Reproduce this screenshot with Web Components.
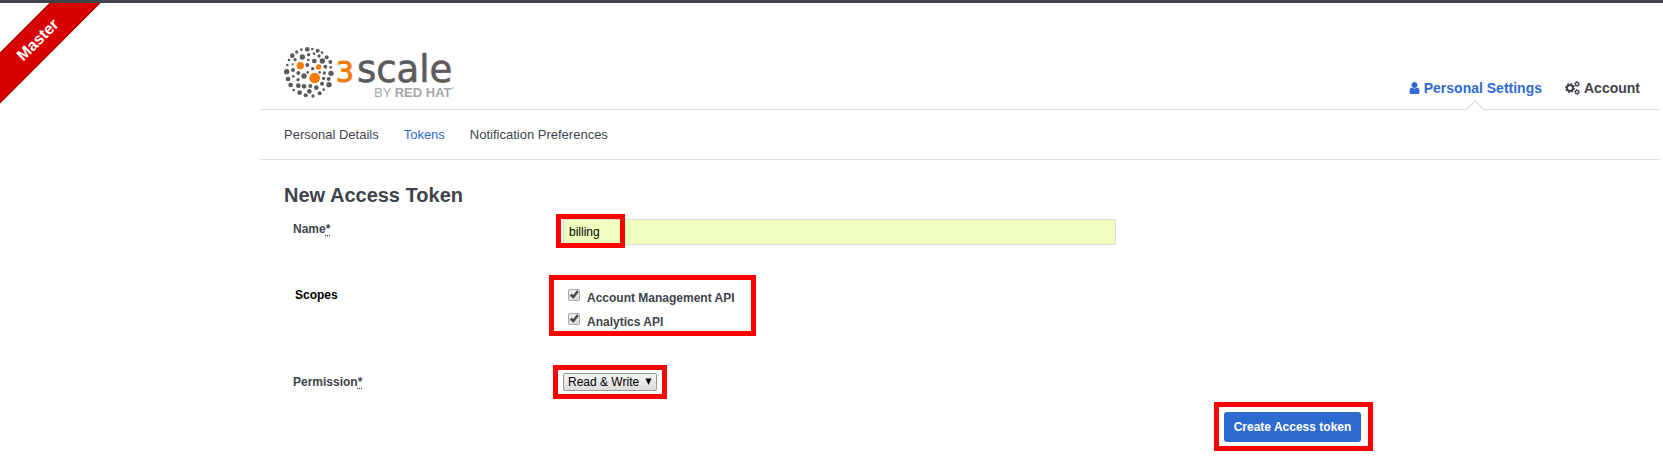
<!DOCTYPE html>
<html lang="en">
<head>
<meta charset="utf-8">
<title>New Access Token</title>
<style>
  body { margin: 0; background: #fff; color: #3f434b; font-family: "Liberation Sans", Arial, sans-serif; font-size: 12px; line-height: 16px; }
</style>
</head>
<body>
<access-token-page></access-token-page>

<template id="env-ribbon">
  <style>
    :host { display: block; position: absolute; top: 3px; left: 0; width: 110px; height: 110px; overflow: hidden; }
    div { position: absolute; left: -63px; top: 19px; width: 200px; height: 34px; line-height: 34px; border: 1px solid #a00000; background: #d90000; color: #fff; font-size: 16px; font-weight: bold; text-align: center; transform: rotate(-45deg); }
  </style>
  <div><slot></slot></div>
</template>

<template id="brand-logo">
  <style>
    :host { display: block; width: 170px; height: 60px; }
    a, svg { display: block; }
  </style>
  <a href="#" aria-label="3scale by Red Hat">
  <svg width="170" height="60" viewBox="0 0 170 60">
    <g transform="scale(.333333)" fill="#5b5b5b">
      <circle cx="70" cy="16" r="7"/><circle cx="85" cy="15" r="4"/><circle cx="52" cy="17" r="4"/><circle cx="101" cy="20" r="6"/><circle cx="38" cy="24" r="5"/><circle cx="114" cy="26" r="4"/>
      <circle cx="25" cy="35" r="7"/><circle cx="55" cy="39" r="8"/><circle cx="74" cy="32" r="5"/><circle cx="90" cy="29" r="4"/><circle cx="105" cy="36" r="5"/><circle cx="128" cy="40" r="6"/>
      <circle cx="15" cy="48" r="4"/><circle cx="33" cy="47" r="5"/><circle cx="73" cy="48" r="4"/><circle cx="91" cy="51" r="7"/><circle cx="115" cy="51" r="8"/><circle cx="139" cy="54" r="6"/>
      <circle cx="10" cy="63" r="4"/><circle cx="26" cy="61" r="3"/><circle cx="70" cy="63" r="6"/><circle cx="86" cy="74" r="5"/><circle cx="124" cy="68" r="6"/><circle cx="140" cy="70" r="4"/>
      <circle cx="8" cy="83" r="8"/><circle cx="27" cy="78" r="6"/><circle cx="43" cy="87" r="6"/><circle cx="28" cy="97" r="4"/><circle cx="60" cy="96" r="8"/><circle cx="42" cy="107" r="5"/><circle cx="71" cy="85" r="4"/>
      <circle cx="107" cy="85" r="4"/><circle cx="121" cy="87" r="5"/><circle cx="141" cy="88" r="8"/><circle cx="134" cy="105" r="6"/><circle cx="119" cy="103" r="5"/><circle cx="12" cy="105" r="7"/>
      <circle cx="20" cy="123" r="7"/><circle cx="43" cy="125" r="7"/><circle cx="60" cy="127" r="7"/><circle cx="79" cy="126" r="6"/><circle cx="76" cy="142" r="7"/><circle cx="97" cy="131" r="7"/><circle cx="114" cy="119" r="6"/>
      <circle cx="135" cy="122" r="8"/><circle cx="119" cy="137" r="4"/><circle cx="29" cy="138" r="4"/><circle cx="47" cy="146" r="7"/><circle cx="65" cy="154" r="6"/><circle cx="107" cy="148" r="6"/><circle cx="87" cy="156" r="5"/>
      <g fill="#f57c00"><circle cx="49" cy="65" r="11"/><circle cx="104" cy="69" r="8"/><circle cx="92" cy="102" r="16"/></g>
    </g>
    <text x="52" y="38" font-family="DejaVu Sans, sans-serif" font-size="28" fill="#f57c00" stroke="#f57c00">3</text>
    <text x="73" y="38" font-family="DejaVu Sans, sans-serif" font-size="37" fill="#5b5b5b" stroke="#5b5b5b" stroke-width=".6">scale</text>
    <text x="90" y="53" font-family="Liberation Sans, Arial, sans-serif" font-size="13" fill="#a8a8a8">BY <tspan font-weight="bold">RED HAT</tspan></text>
    <circle cx="169" cy="44" r="1" fill="#c4c4c4"/>
  </svg></a>
</template>

<template id="nav-tab">
  <style>
    :host { display: block; position: relative; font-size: 14px; font-weight: bold; line-height: 16px; padding-bottom: 13px; }
    a { display: flex; align-items: center; gap: 4px; color: inherit; text-decoration: none; white-space: nowrap; }
    :host([current]) { color: #2e6bd0; }
    .caret { display: none; }
    :host([current]) .caret { display: block; position: absolute; bottom: -1px; left: 50%; margin-left: -9px; }
  </style>
  <a href="#"><slot name="icon"></slot><slot></slot></a>
  <svg class="caret" width="18" height="10"><path d="M0 9.5L9 .5L18 9.5V10H0Z" fill="#fff"/><path d="M0 9.5H.5L9 1L17.500 9.5H18" fill="none" stroke="#ddd" stroke-width="1.300"/></svg>
</template>

<template id="call-out">
  <style>
    :host { display: block; box-sizing: border-box; border: 5px solid #f00; }
  </style>
  <slot></slot>
</template>

<template id="form-row">
  <style>
    :host { display: grid; grid-template-columns: 263px minmax(0, 1fr); align-items: start; }
    .label { padding-top: var(--label-top, 7px); font-weight: bold; }
  </style>
  <div class="label"><slot name="label"></slot></div>
  <div><slot></slot></div>
</template>

<template id="check-item">
  <style>
    :host { display: block; height: 24px; }
    label { display: flex; gap: 7px; font-weight: bold; line-height: 20px; white-space: nowrap; }
    input { appearance: none; box-sizing: border-box; width: 12px; height: 12px; margin: 1px 0 0; border: 1px solid #aaa; border-radius: 2px; background: linear-gradient(#eee, #dedede); }
    .box { position: relative; height: 12px; line-height: 0; }
    svg { position: absolute; left: 0; top: 0; pointer-events: none; display: none; }
    input:checked + svg { display: block; }
  </style>
  <label><span class="box"><input type="checkbox" checked><svg width="12" height="13"><path d="M2 7.500L3.800 6L5.300 7.500L9 2.500L10.500 3.800L5.500 10.500Z" fill="#3f434b" stroke="#3f434b" stroke-width=".5"/></svg></span><slot></slot></label>
</template>

<template id="token-form">
  <style>
    :host { display: block; padding: 23px 24px 0; }
    h2 { margin: 0; font-size: 20px; line-height: 24px; }
    form { margin: 0; padding: 6px 0 0 9px; }
    form-row { font-size: 12px; --label-top: 8px; }
    .name { position: relative; padding: 6px 0 0 7px; }
    .name input { box-sizing: border-box; display: block; width: 51.5%; height: 26px; margin: 0; border: 1px solid #ddd; padding: 0 5px; background: #f0ffbd; color: #000; font: 12px "Liberation Sans", Arial, sans-serif; }
    .name call-out { position: absolute; left: 0; top: 1px; width: 69px; height: 34px; pointer-events: none; }
    .scopes { --label-top: 12px; margin-top: 30px; }
    .scopes [slot=label] { color: #000; margin-left: 2px; }
    .scopes call-out { width: 207px; height: 61px; margin-left: -7px; padding: 8px 0 0 14px; }
    .permission { margin-top: 29px; --label-top: 9px; }
    .permission call-out { width: 114px; height: 34px; padding: 3px 5px; margin-left: -3px; }
    .select { position: relative; display: block; }
    select { appearance: none; box-sizing: border-box; display: block; width: 94px; height: 18px; margin: 0; padding: 0 0 0 4px; border: 1px solid #999; border-radius: 2px; background: linear-gradient(#f4f4f4, #ddd); color: #000; font: 12px "Liberation Sans", Arial, sans-serif; }
    .select svg { position: absolute; right: 5px; top: 5px; pointer-events: none; }
    abbr { text-decoration: underline dotted; text-underline-offset: 2px; }
    .actions { display: flex; justify-content: flex-end; margin: 3px 263px 0 0; }
    .actions call-out { width: 159px; height: 49px; padding: 5px; }
    button { display: block; box-sizing: border-box; width: 137px; height: 30px; padding: 0; border: 0; border-radius: 3px; background: #2e6bd0; color: #fff; font: bold 12px "Liberation Sans", Arial, sans-serif; }
  </style>
  <h2>New Access Token</h2>
  <form>
    <form-row>
      <label slot="label" for="name">Name<abbr title="required">*</abbr></label>
      <div class="name"><input id="name" type="text" value="billing"><call-out></call-out></div>
    </form-row>
    <form-row class="scopes" role="group" aria-labelledby="scopes">
      <div slot="label" id="scopes">Scopes</div>
      <call-out><check-item>Account Management API</check-item><check-item>Analytics API</check-item></call-out>
    </form-row>
    <form-row class="permission">
      <label slot="label" for="permission">Permission<abbr title="required">*</abbr></label>
      <call-out><span class="select"><select id="permission"><option>Read &amp; Write</option></select><svg width="7" height="7"><path d="M.5 .5H6.500L3.500 7Z" fill="#000"/></svg></span></call-out>
    </form-row>
    <div class="actions"><call-out><button type="submit">Create Access token</button></call-out></div>
  </form>
</template>

<template id="access-token-page">
  <style>
    :host { display: block; border-top: 3px solid #3f434b; }
    .content { margin: 0 3px 0 260px; }
    header { display: flex; justify-content: space-between; align-items: flex-end; padding: 41px 20px 0 24px; border-bottom: 1px solid #ddd; }
    brand-logo { margin-bottom: 5px; }
    .tabs { display: flex; gap: 23px; }
    .sub { display: flex; gap: 25px; padding: 17px 24px 16px; border-bottom: 1px solid #ddd; font-size: 13px; }
    .sub a { color: inherit; text-decoration: none; white-space: nowrap; }
    .sub a[aria-current] { color: #2e6bd0; }
    svg { display: block; }
  </style>
  <env-ribbon>Master</env-ribbon>
  <div class="content">
    <header>
      <brand-logo></brand-logo>
      <nav class="tabs" aria-label="Main">
        <nav-tab current><svg slot="icon" width="11" height="14" viewBox="256 0 1280 1792"><path fill="#2e6bd0" d="M1536 1399q0 109-62.500 187t-150.500 78h-854q-88 0-150.500-78t-62.500-187q0-85 8.500-160.500t31.500-152 58.500-131 94-89 134.500-34.500q131 128 313 128t313-128q76 0 134.500 34.500t94 89 58.500 131 31.500 152 8.500 160.500zm-256-887q0 159-112.500 271.500t-271.500 112.500-271.500-112.500-112.500-271.500 112.500-271.500 271.500-112.500 271.500 112.500 112.500 271.500z"/></svg>Personal Settings</nav-tab>
        <nav-tab><svg slot="icon" width="15" height="14" viewBox="0 0 15 14" fill="none" stroke="#3f434b"><circle cx="5" cy="7" r="3" stroke-width="2"/><circle cx="5" cy="7" r="4.300" stroke-width="1.400" stroke-dasharray="1.700 1.677"/><circle cx="12" cy="3" r="1.600" stroke-width="1.200"/><circle cx="12" cy="3" r="2.500" stroke-width="1" stroke-dasharray="1.200 1.418"/><circle cx="12" cy="11" r="1.600" stroke-width="1.200"/><circle cx="12" cy="11" r="2.500" stroke-width="1" stroke-dasharray="1.200 1.418"/></svg>Account</nav-tab>
      </nav>
    </header>
    <nav class="sub" aria-label="Personal settings"><a href="#">Personal Details</a><a href="#" aria-current="page">Tokens</a><a href="#">Notification Preferences</a></nav>
    <main><token-form></token-form></main>
  </div>
</template>

<script>
  class TemplateElement extends HTMLElement {
    constructor() {
      super();
      const template = document.getElementById(this.localName);
      this.attachShadow({ mode: "open" }).append(template.content.cloneNode(true));
    }
  }
  for (const name of ["env-ribbon", "brand-logo", "nav-tab", "call-out", "form-row", "check-item", "token-form", "access-token-page"]) {
    customElements.define(name, class extends TemplateElement {});
  }
</script>
</body>
</html>
